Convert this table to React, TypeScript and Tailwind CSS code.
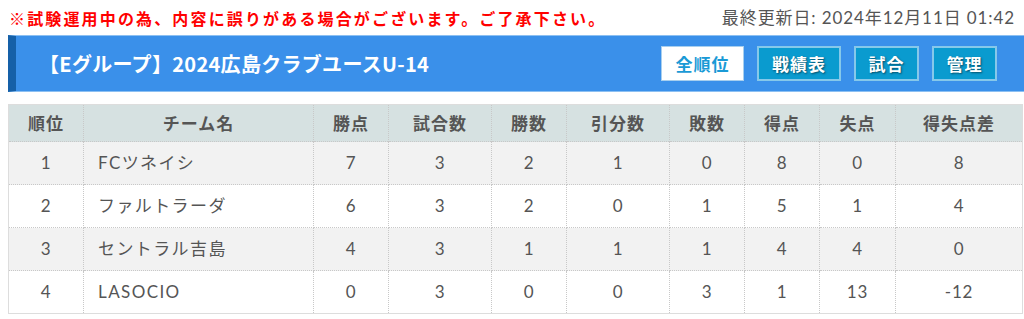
import React from "react";

const cols = [
  { label: "順位", w: "w-[75px]" },
  { label: "チーム名", w: "w-[230px]" },
  { label: "勝点", w: "w-[75px]" },
  { label: "試合数", w: "w-[103px]" },
  { label: "勝数", w: "w-[75px]" },
  { label: "引分数", w: "w-[103px]" },
  { label: "敗数", w: "w-[75px]" },
  { label: "得点", w: "w-[75px]" },
  { label: "失点", w: "w-[76px]" },
  { label: "得失点差", w: "w-[127px]" },
];

const rows = [
  ["1", "FCツネイシ", "7", "3", "2", "1", "0", "8", "0", "8"],
  ["2", "ファルトラーダ", "6", "3", "2", "0", "1", "5", "1", "4"],
  ["3", "セントラル吉島", "4", "3", "1", "1", "1", "4", "4", "0"],
  ["4", "LASOCIO", "0", "3", "0", "0", "3", "1", "13", "-12"],
];

const font = "font-['Lato','Noto_Sans_CJK_JP',sans-serif]";

export default function App() {
  return (
    <div className={`w-[1032px] pl-2 pt-0 bg-white ${font}`}>
      <div className="flex items-center justify-between h-[35px] pr-[17px]">
        <div className="text-[16px] font-bold text-[#ff0000] tracking-[2.15px] pl-[1px] font-['Noto_Sans_CJK_JP',sans-serif]">
          ※試験運用中の為、内容に誤りがある場合がございます。ご了承下さい。
        </div>
        <div className="text-[17px] text-[#555555] tracking-[0.9px]">
          最終更新日: 2024年12月11日 01:42
        </div>
      </div>
      <div className="flex items-center h-[57px] bg-[#3a90ea] border-t border-b border-[#8cc0f2] border-l-[8px] border-l-[#1560a8]">
        <div className="flex-1 pl-[23px] text-[20px] font-bold text-white tracking-[0.3px] font-['Noto_Sans_CJK_JP',sans-serif]">
          【Eグループ】2024広島クラブユースU-14
        </div>
        <div className="flex gap-[13px] pr-[35px] font-['Noto_Sans_CJK_JP',sans-serif]">
          <div className="w-[83px] h-[35px] flex items-center justify-center bg-white border border-[#a8cfee] text-[#1a9ad6] text-[17px] font-bold tracking-[1px]">
            全順位
          </div>
          <div className="w-[84px] h-[35px] flex items-center justify-center bg-[#0a9bcf] border-2 border-[#86c8ea] text-white text-[17px] font-bold tracking-[1px] [text-shadow:1px_1px_2px_rgba(0,0,0,0.5)]">
            戦績表
          </div>
          <div className="w-[65px] h-[35px] flex items-center justify-center bg-[#0a9bcf] border-2 border-[#86c8ea] text-white text-[17px] font-bold tracking-[1px] [text-shadow:1px_1px_2px_rgba(0,0,0,0.5)]">
            試合
          </div>
          <div className="w-[65px] h-[35px] flex items-center justify-center bg-[#0a9bcf] border-2 border-[#86c8ea] text-white text-[17px] font-bold tracking-[1px] [text-shadow:1px_1px_2px_rgba(0,0,0,0.5)]">
            管理
          </div>
        </div>
      </div>
      <table className="mt-[12px] w-[1014px] border-collapse table-fixed border border-[#dddddd]">
        <thead>
          <tr className="h-[37px] bg-[#d6e1e1]">
            {cols.map((c) => (
              <th
                key={c.label}
                className={`${c.w} border-x border-dotted border-[#c8c8c8] text-[17px] font-bold text-[#555555] font-['Noto_Sans_CJK_JP',sans-serif] tracking-[1px]`}
              >
                {c.label}
              </th>
            ))}
          </tr>
        </thead>
        <tbody>
          {rows.map((r, i) => (
            <tr key={i} className={`h-[43px] ${i % 2 === 0 ? "bg-[#f2f2f2]" : "bg-white"}`}>
              {r.map((v, j) => (
                <td
                  key={j}
                  className={`border border-dotted border-[#c8c8c8] text-[17px] text-[#555555] ${
                    j === 1 ? "text-left pl-[14px] tracking-[1.4px]" : "text-center tracking-[0.8px]"
                  }`}
                >
                  {v}
                </td>
              ))}
            </tr>
          ))}
        </tbody>
      </table>
    </div>
  );
}
